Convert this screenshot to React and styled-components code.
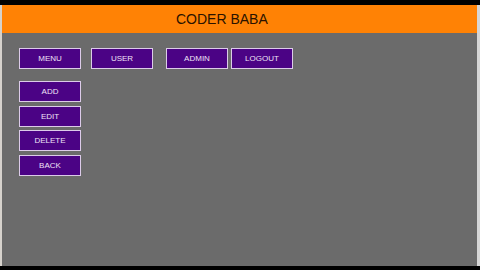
import React from 'react'
import styled, { createGlobalStyle } from 'styled-components'

const GlobalStyle = createGlobalStyle`
  html, body {
    margin: 0;
    padding: 0;
    background: #000;
    font-family: "Liberation Sans", Arial, sans-serif;
  }
`

const App = () => {
  return (
    <>
      <GlobalStyle />
      <Screen>
        <Window>
          <Header>
            <Title>CODER BABA</Title>
          </Header>
          <Content>
            <TopRow>
              <Button>MENU</Button>
              <Button gap={10}>USER</Button>
              <Button gap={13}>ADMIN</Button>
              <Button gap={3}>LOGOUT</Button>
            </TopRow>
            <SideMenu>
              <Button>ADD</Button>
              <Button>EDIT</Button>
              <Button>DELETE</Button>
              <Button>BACK</Button>
            </SideMenu>
          </Content>
        </Window>
      </Screen>
    </>
  )
}

const Screen = styled.div`
  width: 480px;
  height: 270px;
  background: #000;
  padding: 5px 0 4px;
  box-sizing: border-box;
  display: flex;
`

const Window = styled.div`
  flex: 1;
  display: flex;
  flex-direction: column;
  border-left: 2px solid #d6d2cc;
  border-right: 3px solid #d6d6d6;
  background: #6b6b6b;
`

const Header = styled.div`
  height: 28px;
  background: #ff8205;
  display: flex;
  align-items: center;
  padding-left: 174px;
`

const Title = styled.div`
  font-size: 14px;
  color: #2a1200;
`

const Content = styled.div`
  flex: 1;
  padding: 15px 0 0 17px;
  display: flex;
  flex-direction: column;
  gap: 12px;
`

const TopRow = styled.div`
  display: flex;
`

const SideMenu = styled.div`
  display: flex;
  flex-direction: column;
  gap: 3.7px;
`

const Button = styled.div`
  width: 62px;
  height: 21px;
  box-sizing: border-box;
  margin-left: ${props => props.gap || 0}px;
  background: #4b0385;
  border: 1.5px solid #dccbe9;
  color: #eee2f6;
  font-size: 8px;
  display: flex;
  align-items: center;
  justify-content: center;
`

export default App
